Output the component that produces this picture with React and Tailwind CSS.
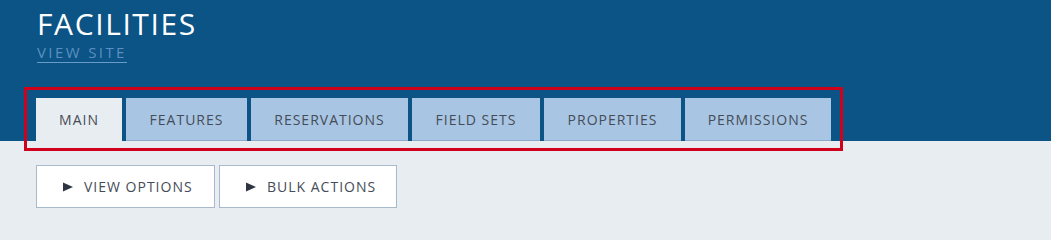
import React from "react";

const tabs = [
  { label: "MAIN", w: "w-[86px]", active: true },
  { label: "FEATURES", w: "w-[121px]" },
  { label: "RESERVATIONS", w: "w-[157px]" },
  { label: "FIELD SETS", w: "w-[128px]" },
  { label: "PROPERTIES", w: "w-[137px]" },
  { label: "PERMISSIONS", w: "w-[146px]" },
];

function Tri() {
  return (
    <svg width="10" height="10" viewBox="0 0 10 10" className="shrink-0">
      <path d="M0 0.5 L10 5 L0 9.5 Z" fill="#2f3540" />
    </svg>
  );
}

export default function App() {
  const font = { fontFamily: '"Open Sans", "Noto Sans", sans-serif' };
  return (
    <div className="w-[1051px] min-h-screen bg-[#e8edf2] overflow-hidden" style={font}>
      <header className="bg-[#0b5485] h-[141px] flex flex-col pl-[36px]">
        <h1 className="text-white text-[30px] leading-none font-normal pt-[9px] pl-[1px] tracking-[1.6px]">FACILITIES</h1>
        <a className="self-start mt-[5px] ml-[1px] text-[#5b90c2] text-[15px] leading-[16px] tracking-[2.4px] border-b border-[#6a9bc8] pb-[2px]">
          VIEW SITE
        </a>
        <div className="relative mt-auto self-start">
          <nav className="flex gap-[4px]">
            {tabs.map((t) => (
              <div
                key={t.label}
                className={`${t.w} h-[43px] flex items-center justify-center text-[14px] tracking-[1px] text-[#464c57] ${
                  t.active ? "bg-[#e8edf2]" : "bg-[#a8c5e3] border-b border-[#8eaacb]"
                }`}
              >
                {t.label}
              </div>
            ))}
          </nav>
          <div className="absolute left-[-12px] right-[-12px] top-[-11px] bottom-[-10px] border-[3px] border-[#d0021b] pointer-events-none" />
        </div>
      </header>
      <div className="flex gap-[4px] pl-[36px] pt-[24px]">
        <button className="w-[179px] h-[43px] bg-white border border-[#a9b9cc] flex items-center pl-[26px] gap-[11px] text-[14px] tracking-[1px] text-[#464c57]">
          <Tri />
          VIEW OPTIONS
        </button>
        <button className="w-[178px] h-[43px] bg-white border border-[#a9b9cc] flex items-center pl-[26px] gap-[11px] text-[14px] tracking-[1px] text-[#464c57]">
          <Tri />
          BULK ACTIONS
        </button>
      </div>
    </div>
  );
}
